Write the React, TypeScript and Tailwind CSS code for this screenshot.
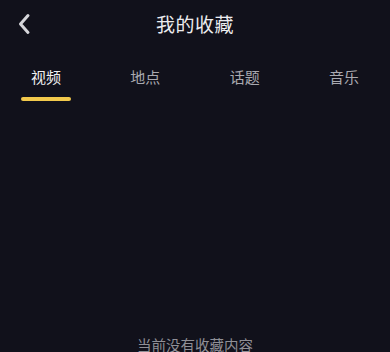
import * as React from "react";

const tabs = ["视频", "地点", "话题", "音乐"];

export default function App() {
  const active = 0;
  return (
    <div
      className="relative h-[352px] w-[390px] overflow-hidden bg-[#11111b] text-white"
      style={{ fontFamily: '"Noto Sans CJK SC", "Noto Sans", sans-serif' }}
    >
      <header className="relative flex h-[48px] items-center justify-center">
        <button className="absolute left-[14px] top-[12px] flex h-[24px] w-[20px] items-center justify-center" aria-label="返回">
          <svg width="14" height="22" viewBox="0 0 14 22" fill="none">
            <path d="M11 2.5 L3.5 11 L11 19.5" stroke="#d6d6da" strokeWidth="3" strokeLinecap="round" strokeLinejoin="round" />
          </svg>
        </button>
        <h1 className="text-[19px] font-normal tracking-[0.5px] text-[#ececef]">我的收藏</h1>
      </header>

      <nav className="mt-[16px] flex justify-between px-[21px]">
        {tabs.map((t, i) => (
          <div key={t} className="flex w-[50px] flex-col items-center">
            <span
              className={`text-[15px] leading-[26px] ${
                i === active ? "text-[#f0f0f2]" : "text-[#a9a9b0]"
              }`}
            >
              {t}
            </span>
            <span
              className={`mt-[7px] h-[4px] w-[50px] rounded-full ${
                i === active ? "bg-[#f2c94c]" : "bg-transparent"
              }`}
            />
          </div>
        ))}
      </nav>

      <div className="mt-[234px] flex justify-center">
        <span className="text-[14.5px] leading-[20px] text-[#8f8f96]">当前没有收藏内容</span>
      </div>
    </div>
  );
}
